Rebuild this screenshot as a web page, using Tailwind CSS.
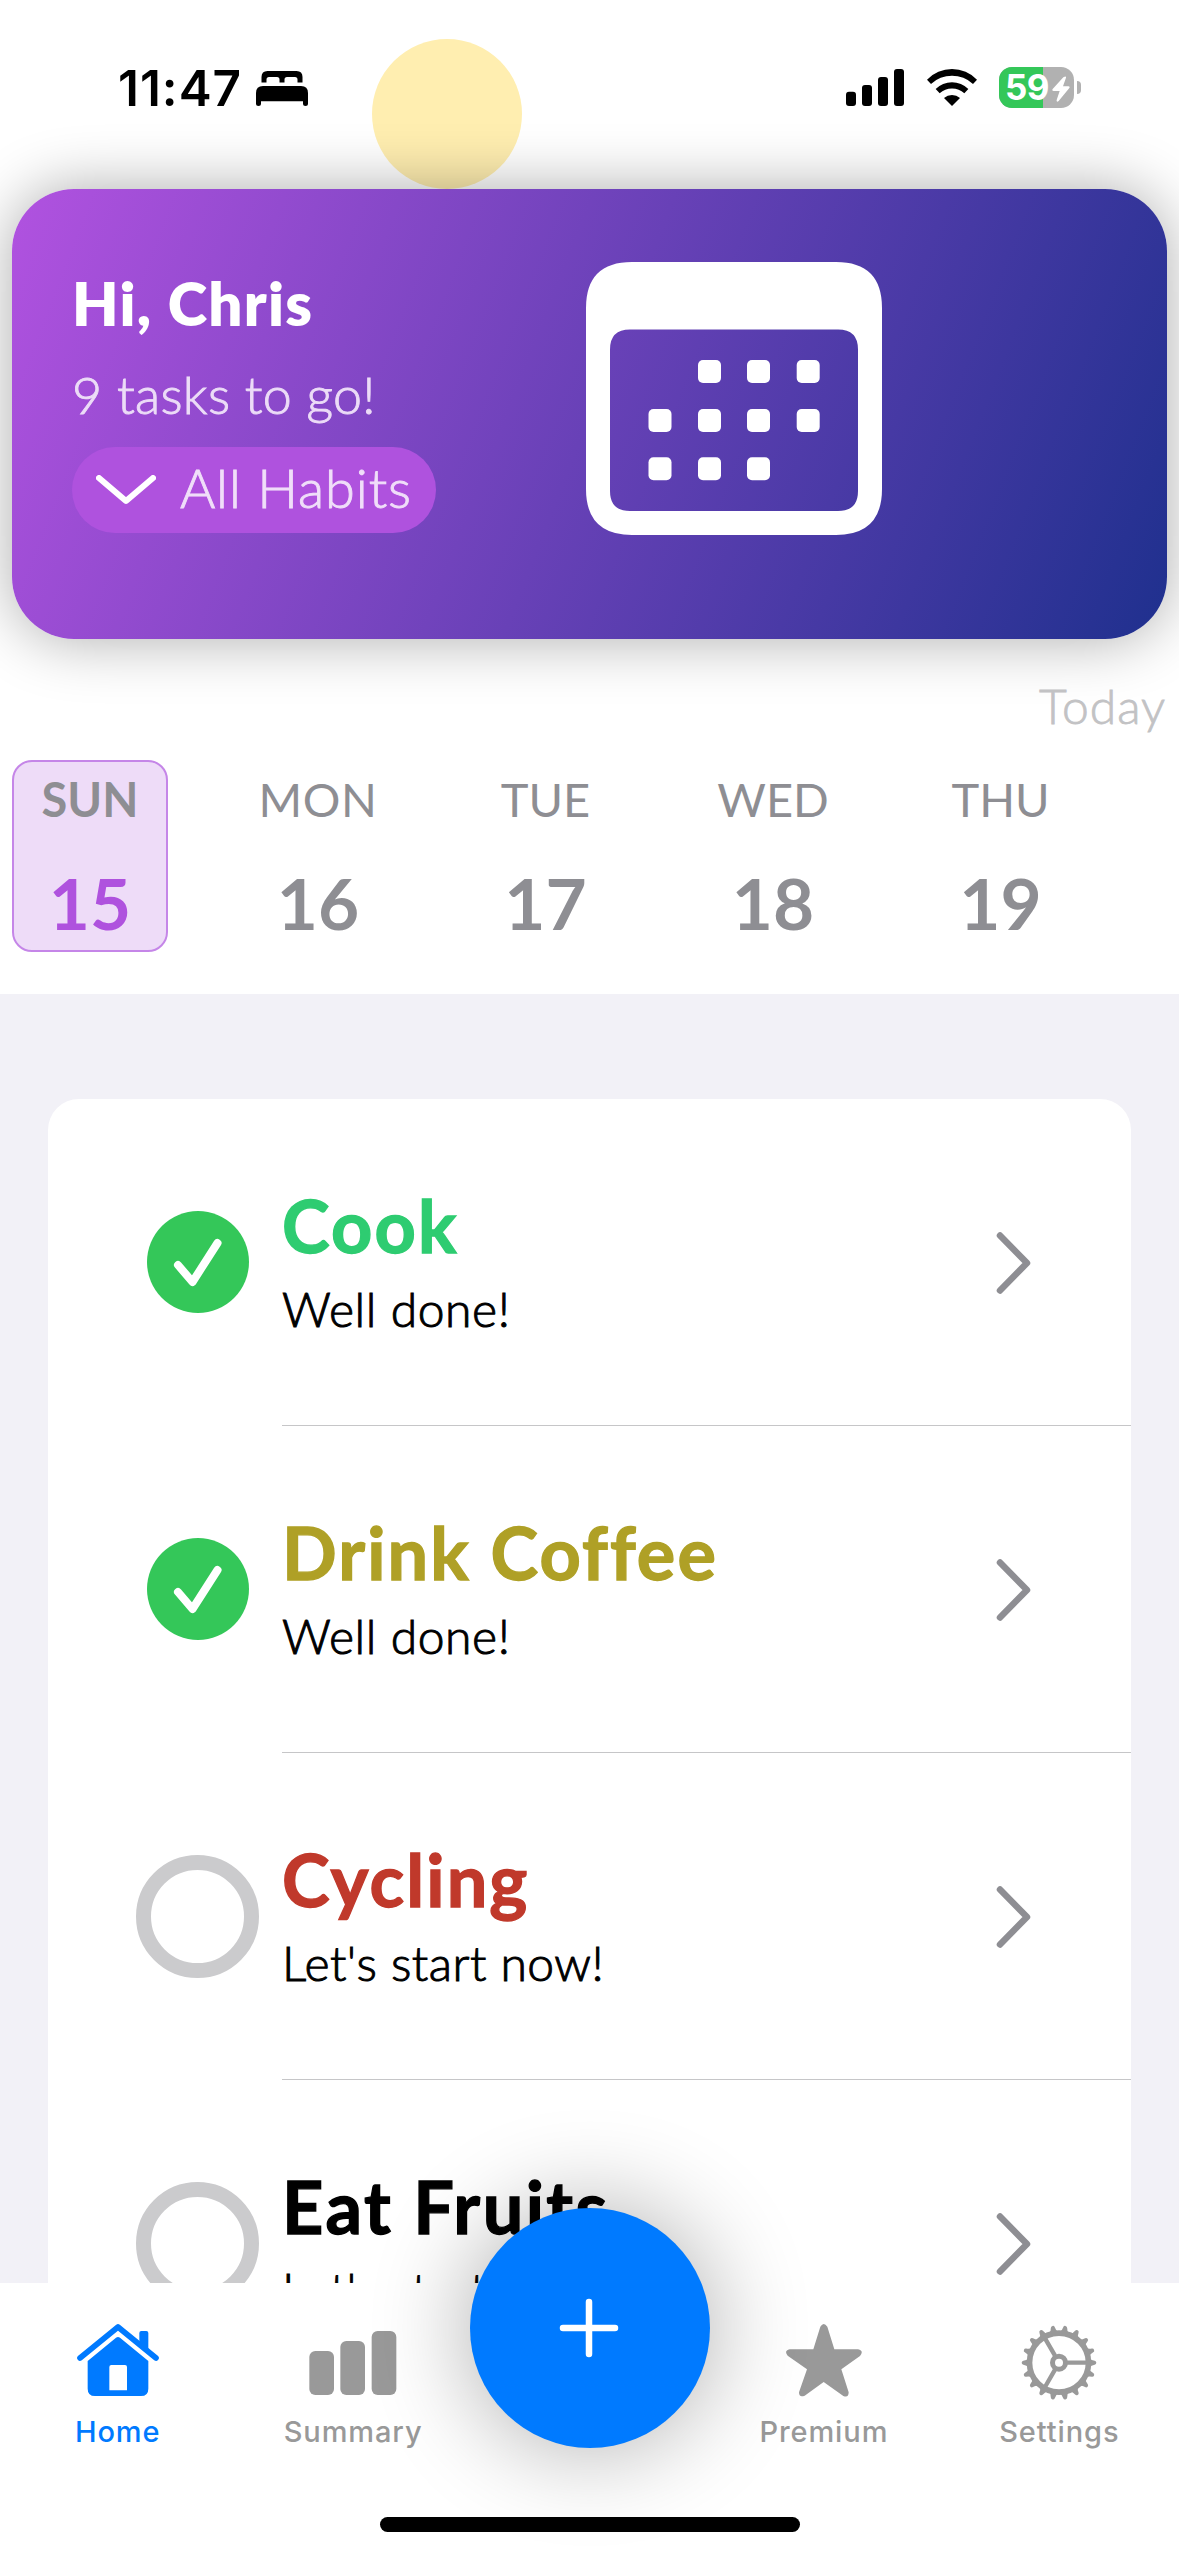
<!DOCTYPE html>
<html lang="en">
<head>
<meta charset="utf-8">
<title>Habits</title>
<script src="https://cdn.jsdelivr.net/npm/@tailwindcss/browser@4"></script>
</head>
<body class="bg-white">
<div class="relative flex h-[2556px] w-[1179px] flex-col overflow-hidden bg-white font-['Lato',sans-serif]">

  <!-- Status bar -->
  <header class="relative flex h-[189px] shrink-0 items-start justify-between pl-[118px] pr-[98px] pt-[66px] font-['Inter',sans-serif]">
    <div class="absolute left-[372px] top-[39px] size-[150px] rounded-full bg-[#ffeeb0]"></div>
    <div class="flex items-start">
      <span class="w-[138px] text-[49.5px] font-semibold leading-[44px] tracking-[1px]">11:47</span>
      <svg class="mt-[5px] h-[35px] w-[52px]" viewBox="0 0 52 35">
        <path d="M5.500 11.500V6Q5.500 0 11.500 0H40.500Q46.500 0 46.500 6V11.500H41.500V8.500Q41.500 6 39 6H31Q28.500 6 28.500 8.500V11.500H23.500V8.500Q23.500 6 21 6H13Q10.500 6 10.500 8.500V11.500Z"/>
        <path d="M0 22Q0 15 7 15H45Q52 15 52 22V32.500Q52 35 49.500 35T47 32.500V30.300H5V32.500Q5 35 2.500 35T0 32.500Z"/>
      </svg>
    </div>
    <div class="flex items-start">
      <svg class="mt-[3px] h-[37px] w-[58px]" viewBox="0 0 58 37">
        <rect y="22.700" width="10" height="14.300" rx="3"/><rect x="16" y="16" width="10" height="21" rx="3"/><rect x="32" y="8" width="10" height="29" rx="3"/><rect x="48" width="10" height="37" rx="3"/>
      </svg>
      <svg class="ml-[22.500px] mt-[3px] h-[37px] w-[50px]" viewBox="440 87 150 111">
        <path d="M440 119A104 104 0 0 1 590 119L578 132A92 92 0 0 0 452 132Z"/>
        <path d="M466 147A69 69 0 0 1 564 147L552 160A54 54 0 0 0 478 160Z"/>
        <path d="M491 174A36 36 0 0 1 539 174L515 198Z"/>
      </svg>
      <div class="ml-[22.500px] mt-px flex items-center">
        <div class="relative flex h-[41px] w-[75px] items-center overflow-hidden rounded-[13px] bg-[#b1b1b1]">
          <div class="absolute inset-y-0 left-0 w-[44px] bg-[#34c759]"></div>
          <span class="relative pl-[6px] text-[35px] font-bold leading-[41px] tracking-[-0.5px] text-white">59</span>
          <svg class="absolute left-[52.500px] top-[8.500px] h-[26px] w-[18px]" viewBox="814 107 54 78" fill="#fff"><path d="M848 111Q857 105 856 112L847 138H863Q869 139 866 143L834 182Q827 187 828 179L837 152H819Q813 151 816 146Z"/></svg>
        </div>
        <div class="ml-[3px] h-[13px] w-[4px] rounded-r-full bg-[#b1b1b1]"></div>
      </div>
    </div>
  </header>

  <!-- Greeting card -->
  <section class="relative mx-3 flex h-[450px] shrink-0 rounded-[62px] bg-[linear-gradient(111.3deg,#b152e0,#1f308e)] pl-[60px] shadow-[0_0_62px_rgba(0,0,0,0.33)]">
    <div class="flex w-[514px] flex-col items-start pt-[78px]">
      <h1 class="whitespace-nowrap text-[60px] font-extrabold leading-[72px] tracking-[1.3px] text-white">Hi, Chris</h1>
      <p class="mt-[24px] whitespace-nowrap text-[52px] font-light leading-[62px] tracking-[0.3px] text-[#ecdcf7] [-webkit-text-stroke:0.9px_#ecdcf7]">9 tasks to go!</p>
      <button class="mt-[22px] flex h-[86px] w-[364px] items-center rounded-[43px] bg-[#af52de] pl-[24px]">
        <svg class="h-[30px] w-[60px]" viewBox="0 0 60 30" fill="none" stroke="#fff" stroke-width="6" stroke-linecap="round" stroke-linejoin="round"><path d="M3 3L30 26L57 3"/></svg>
        <span class="whitespace-nowrap pb-1 pl-[24px] text-[54px] font-light leading-[62px] tracking-[0.9px] text-[#f0def9] [-webkit-text-stroke:0.9px_#f0def9]">All Habits</span>
      </button>
    </div>
    <svg class="mt-[73px] h-[273px] w-[296px]" viewBox="0 0 296 273" fill="#fff">
      <path fill-rule="evenodd" d="M46 0H250Q296 0 296 46V227Q296 273 250 273H46Q0 273 0 227V46Q0 0 46 0ZM44 67.500Q24 67.500 24 87.500V229Q24 249 44 249H252Q272 249 272 229V87.500Q272 67.500 252 67.500Z"/>
      <rect x="112" y="98" width="23" height="23" rx="5"/><rect x="161" y="98" width="23" height="23" rx="5"/><rect x="210.700" y="98" width="23" height="23" rx="5"/>
      <rect x="62.500" y="147" width="23" height="23" rx="5"/><rect x="112" y="147" width="23" height="23" rx="5"/><rect x="161" y="147" width="23" height="23" rx="5"/><rect x="210.700" y="147" width="23" height="23" rx="5"/>
      <rect x="62.500" y="195.300" width="23" height="23" rx="5"/><rect x="112" y="195.300" width="23" height="23" rx="5"/><rect x="161" y="195.300" width="23" height="23" rx="5"/>
    </svg>
  </section>

  <!-- Week strip -->
  <section class="relative flex h-[355px] shrink-0 flex-col pt-[38px]">
    <div class="pr-[13px] text-right text-[48px] font-light leading-[58px] tracking-[1px] text-[#c2c2c4] [-webkit-text-stroke:0.8px_#c2c2c4]">Today</div>
    <div class="mt-[25px] flex gap-[72.500px] pl-3 text-[#8e8e93]">
      <div class="flex h-[192px] w-[156px] flex-col items-center rounded-[20px] border-2 border-[#c586e8] bg-[#eedcf8] pt-[8px]"><div class="text-[47px] font-bold leading-[58px]">SUN</div><div class="mt-[32px] text-[71px] font-bold leading-[86px] text-[#af52de]">15</div></div>
      <div class="flex h-[192px] w-[155px] flex-col items-center pt-[10px]"><div class="text-[47px] leading-[58px] tracking-[0.6px]">MON</div><div class="mt-[32px] text-[71px] font-bold leading-[86px]">16</div></div>
      <div class="flex h-[192px] w-[155px] flex-col items-center pt-[10px]"><div class="text-[47px] leading-[58px]">TUE</div><div class="mt-[32px] text-[71px] font-bold leading-[86px]">17</div></div>
      <div class="flex h-[192px] w-[155px] flex-col items-center pt-[10px]"><div class="text-[47px] leading-[58px]">WED</div><div class="mt-[32px] text-[71px] font-bold leading-[86px]">18</div></div>
      <div class="flex h-[192px] w-[155px] flex-col items-center pt-[10px]"><div class="text-[47px] leading-[58px]">THU</div><div class="mt-[32px] text-[71px] font-bold leading-[86px]">19</div></div>
    </div>
  </section>

  <!-- Habit list -->
  <main class="h-[1289px] shrink-0 overflow-hidden bg-[#f2f1f7] px-[48px] pt-[105px]">
    <ul class="rounded-t-[31px] bg-white">
      <li class="flex h-[327px] pl-[88px]">
        <div class="flex w-[146px] items-center pb-px pl-[11px]"><svg class="size-[102px]" viewBox="0 0 102 102"><circle cx="51" cy="51" r="51" fill="#34c759"/><path d="M31 54L45.500 71L70.500 32" fill="none" stroke="#fff" stroke-width="8" stroke-linecap="round" stroke-linejoin="round"/></svg></div>
        <div class="flex flex-1 border-b border-[#c6c6c8] pt-[83px]">
          <div class="flex-1 whitespace-nowrap"><h2 class="text-[72px] font-bold leading-[86px] tracking-[2.100px] text-[#2ecc71] [-webkit-text-stroke:1.3px_#2ecc71]">Cook</h2><p class="mt-[12px] text-[48px] font-light leading-[58px] tracking-[0.6px] [-webkit-text-stroke:1px_black]">Well done!</p></div>
          <svg class="mr-[99px] mt-[50px] h-[62px] w-[36px]" viewBox="0 0 36 62" fill="none" stroke="#8e8e93" stroke-width="6.500" stroke-linecap="round" stroke-linejoin="round"><path d="M4 3.500L31 31L4 58.500"/></svg>
        </div>
      </li>
      <li class="flex h-[327px] pl-[88px]">
        <div class="flex w-[146px] items-center pb-px pl-[11px]"><svg class="size-[102px]" viewBox="0 0 102 102"><circle cx="51" cy="51" r="51" fill="#34c759"/><path d="M31 54L45.500 71L70.500 32" fill="none" stroke="#fff" stroke-width="8" stroke-linecap="round" stroke-linejoin="round"/></svg></div>
        <div class="flex flex-1 border-b border-[#c6c6c8] pt-[83px]">
          <div class="flex-1 whitespace-nowrap"><h2 class="text-[72px] font-bold leading-[86px] tracking-[2.100px] text-[#afa026] [-webkit-text-stroke:1.3px_#afa026]">Drink Coffee</h2><p class="mt-[12px] text-[48px] font-light leading-[58px] tracking-[0.6px] [-webkit-text-stroke:1px_black]">Well done!</p></div>
          <svg class="mr-[99px] mt-[50px] h-[62px] w-[36px]" viewBox="0 0 36 62" fill="none" stroke="#8e8e93" stroke-width="6.500" stroke-linecap="round" stroke-linejoin="round"><path d="M4 3.500L31 31L4 58.500"/></svg>
        </div>
      </li>
      <li class="flex h-[327px] pl-[88px]">
        <div class="flex w-[146px] items-center"><div class="size-[123px] rounded-full border-[15px] border-[#cbcbcd]"></div></div>
        <div class="flex flex-1 border-b border-[#c6c6c8] pt-[83px]">
          <div class="flex-1 whitespace-nowrap"><h2 class="text-[72px] font-bold leading-[86px] tracking-[2.100px] text-[#c0392b] [-webkit-text-stroke:1.3px_#c0392b]">Cycling</h2><p class="mt-[12px] text-[48px] font-light leading-[58px] tracking-[0.5px] [-webkit-text-stroke:1px_black]">Let's start now!</p></div>
          <svg class="mr-[99px] mt-[50px] h-[62px] w-[36px]" viewBox="0 0 36 62" fill="none" stroke="#8e8e93" stroke-width="6.500" stroke-linecap="round" stroke-linejoin="round"><path d="M4 3.500L31 31L4 58.500"/></svg>
        </div>
      </li>
      <li class="flex h-[327px] pl-[88px]">
        <div class="flex w-[146px] items-center"><div class="size-[123px] rounded-full border-[15px] border-[#cbcbcd]"></div></div>
        <div class="flex flex-1 border-b border-[#c6c6c8] pt-[83px]">
          <div class="flex-1 whitespace-nowrap"><h2 class="text-[72px] font-bold leading-[86px] tracking-[2.400px] text-black [-webkit-text-stroke:1.3px_black]">Eat Fruits</h2><p class="mt-[12px] text-[48px] font-light leading-[58px] tracking-[0.5px] [-webkit-text-stroke:1px_black]">Let's start now!</p></div>
          <svg class="mr-[99px] mt-[50px] h-[62px] w-[36px]" viewBox="0 0 36 62" fill="none" stroke="#8e8e93" stroke-width="6.500" stroke-linecap="round" stroke-linejoin="round"><path d="M4 3.500L31 31L4 58.500"/></svg>
        </div>
      </li>
    </ul>
  </main>

  <!-- Tab bar -->
  <nav class="relative flex h-[273px] shrink-0 flex-col items-center bg-white font-['Inter',sans-serif] text-[29px] font-medium leading-[36px] tracking-[0.9px] text-[#999]">
    <div class="grid w-full grid-cols-5 pr-[2px] pt-[38px]">
      <a class="flex flex-col items-center text-[#007aff]">
        <svg class="h-[80px] w-[84px]" viewBox="227 183 252 240">
          <path d="M239 294L353 201L467 294" fill="none" stroke="#007aff" stroke-width="17" stroke-linecap="round" stroke-linejoin="round"/>
          <path fill="#007aff" d="M417 246V219Q417 213 423 213H438Q444 213 444 219V270Z"/>
          <path fill="#007aff" fill-rule="evenodd" d="M262 303L347 233Q353 229 359 233L444 303V386Q444 408 422 408H284Q262 408 262 386ZM327 321V391H380V321Q380 315 374 315H333Q327 315 327 321Z"/>
        </svg>
        <span class="mt-[13px]">Home</span>
      </a>
      <a class="flex flex-col items-center">
        <svg class="h-[80px] w-[88px]" viewBox="926 183 264 240" fill="#999"><rect x="927" y="273" width="74" height="132" rx="18"/><rect x="1020" y="243" width="74" height="162" rx="18"/><rect x="1114" y="213" width="74" height="192" rx="18"/></svg>
        <span class="mt-[13px]">Summary</span>
      </a>
      <div></div>
      <a class="flex flex-col items-center">
        <svg class="h-[80px] w-[80px]" viewBox="253 483 240 240" fill="#999"><path d="M341 568L362 500Q372 484 383 500L404 568H475Q494 572 481 588L425 628L447 697Q447 714 431 708L372 666L315 707Q298 714 298 697L322 628L264 587Q252 572 270 568Z"/></svg>
        <span class="mt-[13px]">Premium</span>
      </a>
      <a class="flex flex-col items-center">
        <svg class="h-[80px] w-[80px]" viewBox="-120 -125 240 240" fill="#999">
          <defs><path id="tooth" d="M90 -15Q97 -7 107 -6Q112 -5 112 0Q112 5 107 6Q97 7 90 15Z"/></defs>
          <use href="#tooth"/><use href="#tooth" transform="rotate(20)"/><use href="#tooth" transform="rotate(40)"/><use href="#tooth" transform="rotate(60)"/><use href="#tooth" transform="rotate(80)"/><use href="#tooth" transform="rotate(100)"/><use href="#tooth" transform="rotate(120)"/><use href="#tooth" transform="rotate(140)"/><use href="#tooth" transform="rotate(160)"/><use href="#tooth" transform="rotate(180)"/><use href="#tooth" transform="rotate(200)"/><use href="#tooth" transform="rotate(220)"/><use href="#tooth" transform="rotate(240)"/><use href="#tooth" transform="rotate(260)"/><use href="#tooth" transform="rotate(280)"/><use href="#tooth" transform="rotate(300)"/><use href="#tooth" transform="rotate(320)"/><use href="#tooth" transform="rotate(340)"/>
          <g fill="none" stroke="#999"><circle r="88.500" stroke-width="17"/><circle r="19.500" stroke-width="15"/><path stroke-width="13" d="M24 0H84M-12 -21L-42 -73M-12 21L-42 73"/></g>
        </svg>
        <span class="mt-[13px]">Settings</span>
      </a>
    </div>
    <button class="absolute left-[470px] top-[-75px] flex size-[240px] items-center justify-center rounded-full bg-[#007aff] shadow-[0_0_100px_rgba(0,0,0,0.33)]">
      <svg class="h-[60px] w-[62px]" viewBox="0 0 62 60" stroke="#fff" stroke-width="6.500" stroke-linecap="round"><path d="M30 4V56M4 30H56"/></svg>
    </button>
    <div class="relative mt-[67px] h-[15px] w-[420px] rounded-full bg-black"></div>
  </nav>
</div>
</body>
</html>
